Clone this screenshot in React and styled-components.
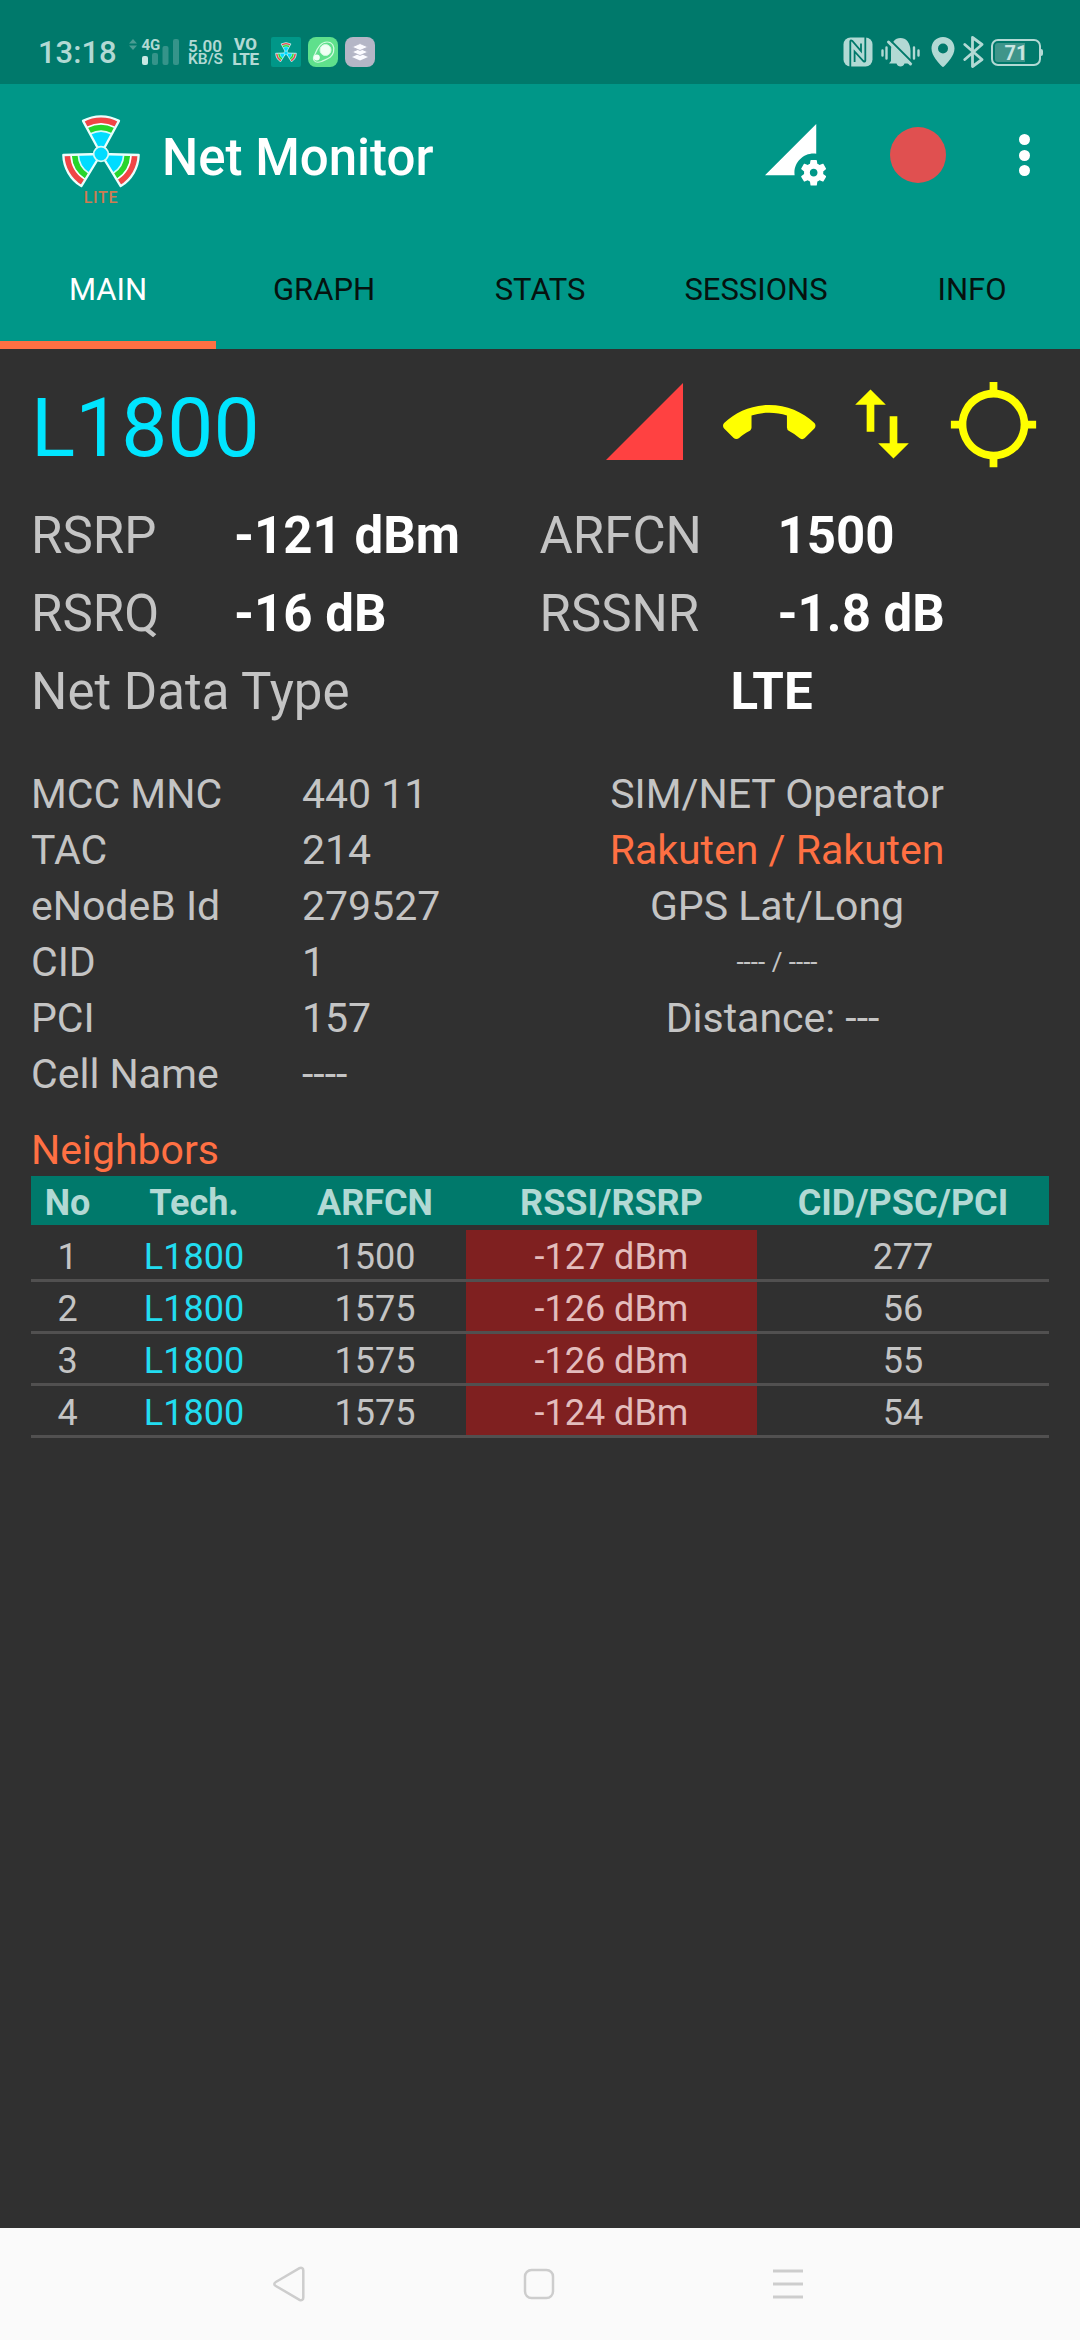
import React from "react";
import styled, { createGlobalStyle } from "styled-components";
import {
  MdPermDataSetting,
  MdCallEnd,
  MdImportExport,
  MdLocationSearching,
} from "react-icons/md";

const c = {
  dark: "#00796b",
  teal: "#009788",
  bg: "#303030",
  grey: "#c4c4c4",
  cyan: "#00e5ff",
  orange: "#ff7043",
  pale: "#b2d9d4",
  yellow: "#ffff00",
};

const GlobalStyle = createGlobalStyle`
  * { box-sizing: border-box; }
  body { margin: 0; background: ${c.bg}; font-family: Roboto, "Liberation Sans", sans-serif; }
  svg { display: block; flex: none; }
`;

const Screen = styled.div`
  width: 1080px;
  height: 2340px;
  display: flex;
  flex-direction: column;
  background: ${c.bg};
  overflow: hidden;
  white-space: nowrap;
`;

/* ---------- status bar ---------- */

const StatusBar = styled.header`
  height: 84px;
  flex: none;
  padding: 20px 37px 0 38px;
  background: ${c.dark};
  color: ${c.pale};
  display: flex;
  align-items: center;
`;
const Clock = styled.span`
  width: 90px;
  font-size: 31px;
  font-weight: 500;
  line-height: 36px;
  padding-top: 1px;
`;
const SignalBox = styled.div`
  width: 60px;
  height: 30px;
  display: flex;
`;
const StackedLabel = styled.div`
  width: ${(p) => p.$width}px;
  display: flex;
  flex-direction: column;
  align-items: ${(p) => p.$align || "flex-start"};
  font-weight: ${(p) => p.$weight};
`;
const StackedLine = styled.span`
  font-size: ${(p) => p.$size}px;
  line-height: ${(p) => p.$line}px;
  letter-spacing: ${(p) => p.$spacing || 0}px;
`;
const AppBadges = styled.div`
  margin-left: 12px;
  display: flex;
  gap: 7px;
`;
const AppBadge = styled.div`
  width: 30px;
  height: 30px;
  border-radius: ${(p) => p.$radius}px;
  background: ${(p) => p.$bg};
  display: grid;
  place-items: center;
`;
const StatusIcons = styled.div`
  margin-left: auto;
  display: flex;
  align-items: center;
`;
const IconSlot = styled.div`
  margin-right: ${(p) => p.$gap}px;
  padding-bottom: ${(p) => p.$lift || 0}px;
`;
const Battery = styled.div`
  width: 50px;
  height: 27px;
  border: 2px solid ${c.pale};
  border-radius: 7px;
  padding: 2px;
  display: flex;
`;
const BatteryLevel = styled.div`
  width: 42px;
  border-radius: 3px;
  background: linear-gradient(90deg, #3f958a 71%, transparent 71%);
  font-size: 20px;
  font-weight: 700;
  line-height: 20px;
  text-align: center;
  color: #c8e6e2;
`;
const BatteryTip = styled.div`
  width: 2px;
  height: 7px;
  background: ${c.pale};
  border-radius: 0 2px 2px 0;
`;

/* ---------- toolbar and tabs ---------- */

const Toolbar = styled.div`
  height: 142px;
  flex: none;
  padding: 0 50px 0 61px;
  background: ${c.teal};
  display: flex;
  align-items: center;
  color: #fff;
`;
const Logo = styled.div`
  width: 80px;
  height: 90px;
  margin-top: 7px;
  display: flex;
  flex-direction: column;
  align-items: center;
  gap: 2px;
`;
const LogoTag = styled.span`
  font-size: 16px;
  line-height: 16px;
  font-weight: 500;
  letter-spacing: 0.7px;
  color: #cf7c51;
`;
const Title = styled.h1`
  margin: 5px 0 0 21px;
  font-size: 51px;
  font-weight: 500;
  line-height: 60px;
`;
const Actions = styled.div`
  margin-left: auto;
  display: flex;
  align-items: center;
`;
const RecordDot = styled.div`
  width: 56px;
  height: 56px;
  border-radius: 50%;
  background: #e05050;
  margin: 0 73px 0 64px;
`;
const Overflow = styled.div`
  display: flex;
  flex-direction: column;
  gap: 4.6px;
`;
const Dot = styled.i`
  width: 11px;
  height: 11px;
  border-radius: 50%;
  background: #fff;
`;
const Tabs = styled.nav`
  height: 123px;
  flex: none;
  background: ${c.teal};
  display: grid;
  grid-template-columns: repeat(5, 1fr);
`;
const Tab = styled.div`
  padding-top: 12px;
  border-bottom: 8px solid ${(p) => (p.$active ? c.orange : "transparent")};
  color: ${(p) => (p.$active ? "#fff" : "#06120f")};
  display: flex;
  align-items: center;
  justify-content: center;
  font-size: 31px;
`;

/* ---------- content ---------- */

const Content = styled.main`
  flex: 1;
  padding: 0 31px;
  color: ${c.grey};
`;
const CellHeader = styled.section`
  height: 148px;
  padding-top: 2px;
  padding-right: 9.5px;
  display: flex;
  align-items: center;
  color: ${c.yellow};
`;
const Band = styled.h2`
  margin: 8px auto 0 0;
  font-size: 82px;
  font-weight: 400;
  line-height: 96px;
  color: ${c.cyan};
`;
const CellIcons = styled.div`
  display: flex;
  align-items: center;
`;
const Metrics = styled.section`
  display: grid;
  grid-template-columns: 203px 305.5px 238px 1fr;
  grid-auto-rows: 78px;
  font-size: 51px;
  line-height: 78px;
`;
const MetricValue = styled.b`
  color: #fff;
`;
const NetType = styled.section`
  display: flex;
  font-size: 51px;
  line-height: 78px;
`;
const NetLabel = styled.span`
  width: 463px;
`;
const NetValue = styled.b`
  flex: 1;
  text-align: center;
  color: #fff;
`;
const Details = styled.section`
  margin-top: 35px;
  display: flex;
  font-size: 41px;
  line-height: 56px;
`;
const Pairs = styled.div`
  width: 474px;
  display: grid;
  grid-template-columns: 271px 1fr;
  grid-auto-rows: 56px;
`;
const Operator = styled.div`
  flex: 1;
  display: flex;
  flex-direction: column;
  align-items: center;
`;
const OperatorLine = styled.span`
  height: 56px;
  font-size: ${(p) => (p.$small ? 26 : 41)}px;
  padding-right: ${(p) => p.$trail || 0}px;
  color: ${(p) => (p.$accent ? c.orange : "inherit")};
`;
const SectionTitle = styled.h3`
  margin: 22px 0 0;
  height: 52px;
  font-size: 41px;
  font-weight: 400;
  line-height: 52px;
  color: ${c.orange};
`;
const Table = styled.section`
  font-size: 36px;
`;
const TableRow = styled.div`
  display: grid;
  grid-template-columns: 73px 180px 182px 291px 1fr;
  height: 52px;
  border-bottom: 3px solid #515050;
`;
const TableHead = styled(TableRow)`
  height: 49px;
  margin-bottom: 5px;
  border: 0;
  background: ${c.dark};
  color: ${c.pale};
  font-weight: 700;
`;
const Cell = styled.span`
  padding-top: 5px;
  line-height: 44px;
  text-align: center;
  color: ${(p) => p.$color || "inherit"};
  background: ${(p) => p.$bg || "transparent"};
`;

const NavBar = styled.footer`
  height: 112px;
  flex: none;
  background: #fafafa;
  display: flex;
  justify-content: space-between;
  align-items: center;
  padding: 0 276px 0 272px;
`;

/* ---------- drawings ---------- */

const point = (r, deg) => {
  const a = (deg * Math.PI) / 180;
  return `${(r * Math.sin(a)).toFixed(2)} ${(-r * Math.cos(a)).toFixed(2)}`;
};
const arc = (r, half) => `M${point(r, -half)}A${r} ${r} 0 0 1 ${point(r, half)}`;

function Blades({ size }) {
  return (
    <svg width={size} height={(size * 222) / 240} viewBox="-120 -120 240 222">
      {[0, 120, 240].map((turn) => (
        <g key={turn} transform={`rotate(${turn})`} fill="none">
          <path d={`M0 0L${point(112, -28)}A112 112 0 0 1 ${point(112, 28)}Z`} fill="#00dcff" />
          <path d={arc(101, 27)} stroke="#f04545" strokeWidth="20" />
          <path d={arc(79, 27)} stroke="#27d52b" strokeWidth="19" />
          <path d={arc(90, 27)} stroke="#fff" strokeWidth="5" />
          <path d={arc(68, 27)} stroke="#d9fbf6" strokeWidth="5" />
          <path
            d={`M0 0L${point(113, -28.5)}A113 113 0 0 1 ${point(113, 28.5)}Z`}
            stroke="#eafffc"
            strokeWidth="7"
            strokeLinejoin="round"
          />
        </g>
      ))}
      <circle r="22" fill="#00dcff" stroke="#d9fbf6" strokeWidth="5" />
    </svg>
  );
}

function Signal() {
  return (
    <svg width="52" height="30" viewBox="128 37 52 30">
      <path d="M129 43.5L133 39l4 4.500zM129 45.500h8l-4 4.500z" fill="#4b9d93" />
      <text x="141.500" y="50" fontSize="15" fontWeight="700" fill={c.pale}>4G</text>
      <rect x="142" y="56" width="6" height="9" rx="2" fill="#c8e8e3" />
      <rect x="152" y="53" width="6" height="12" rx="2" fill="#35948a" />
      <rect x="162.500" y="46" width="6" height="19" rx="2" fill="#35948a" />
      <rect x="173" y="39" width="6" height="26" rx="2" fill="#35948a" />
    </svg>
  );
}

const Nfc = () => (
  <svg width="30" height="30" viewBox="0 0 30 30">
    <rect x="0.500" y="0.500" width="29" height="29" rx="7" fill={c.pale} />
    <path d="M7.300 30V4.500q.3-2 2-.5L18 14V6.500" fill="none" stroke={c.dark} strokeWidth="1.800" />
    <path d="M22.300 0v23.500q-.3 2-2 .5L11.600 14.500V25" fill="none" stroke={c.dark} strokeWidth="1.800" />
  </svg>
);

const BellOff = () => (
  <svg width="40" height="30" viewBox="0 0 40 30">
    <path d="M10 24V14C10 5.500 14 1 19.500 1S29.500 5.500 29.500 14v10l2 2.500H23.500c-1 4-7 4-8 0H8z" fill={c.pale} />
    <path d="M9 3L32 26" stroke={c.dark} strokeWidth="2" />
    <path d="M7.500 5L29.500 27" stroke={c.pale} strokeWidth="3" strokeLinecap="round" />
    <path d="M1.500 13.500v5M5.500 10.500v11M33 10.500v11M37.500 13.500v5" stroke={c.pale} strokeWidth="2.400" strokeLinecap="round" />
  </svg>
);

const Pin = () => (
  <svg width="24" height="30" viewBox="0 0 24 30">
    <path fillRule="evenodd" d="M12 0C5.300 0 .5 5 .5 11.500.5 19 8 26 10.800 29.300q1.200 1.400 2.400 0C16 26 23.500 19 23.500 11.500 23.500 5 18.700 0 12 0zm0 6.500a5 5 0 110 10 5 5 0 010-10z" fill={c.pale} />
  </svg>
);

const Bluetooth = () => (
  <svg width="22" height="34" viewBox="0 0 22 34">
    <path d="M1.800 9.500L19 24.500 9.500 31.500V2.500L19 9.500 1.800 24.500" fill="none" stroke={c.pale} strokeWidth="2.800" strokeLinejoin="round" strokeLinecap="round" />
  </svg>
);

const Orbit = () => (
  <svg width="26" height="26" viewBox="0 0 26 26">
    <path d="M5 15C8 8 11 3 17 3c5.500 0 8 5 6.500 10-1.500 6-7 7-12 9.500-7 2.500-10-2-6.500-7.500z" fill="none" stroke="#d2fbe0" strokeWidth="1.200" />
    <circle cx="15.500" cy="11" r="5.500" fill="#f1fff5" stroke="#d2fbe0" />
    <circle cx="6.800" cy="18.500" r="3" fill="#f1fff5" />
  </svg>
);

const Layers = () => (
  <svg width="18" height="18" viewBox="0 0 18 18" fill="#fbfbff">
    <path d="M9 10.500l8 3.500-8 3.500L1 14z" />
    <path d="M9 5.500L17 9l-8 3.500L1 9z" stroke="#b4b6c6" strokeWidth="0.900" />
    <path d="M9 .500L17 4 9 7.500 1 4z" stroke="#b4b6c6" strokeWidth="0.900" />
  </svg>
);

const SignalTriangle = () => (
  <svg width="77" height="77" viewBox="0 0 77 77">
    <path d="M0 77L77 0v77z" fill="#ff4141" />
  </svg>
);

/* ---------- data ---------- */

const metrics = [
  ["RSRP", "-121 dBm", "ARFCN", "1500"],
  ["RSRQ", "-16 dB", "RSSNR", "-1.8 dB"],
];
const pairs = [
  ["MCC MNC", "440 11"],
  ["TAC", "214"],
  ["eNodeB Id", "279527"],
  ["CID", "1"],
  ["PCI", "157"],
  ["Cell Name", "----"],
];
const neighbors = [
  ["1", "L1800", "1500", "-127 dBm", "277"],
  ["2", "L1800", "1575", "-126 dBm", "56"],
  ["3", "L1800", "1575", "-126 dBm", "55"],
  ["4", "L1800", "1575", "-124 dBm", "54"],
];

export default function App() {
  return (
    <Screen>
      <GlobalStyle />
      <StatusBar>
        <Clock>13:18</Clock>
        <SignalBox><Signal /></SignalBox>
        <StackedLabel $width={44} $weight={600}>
          <StackedLine $size={17} $line={14}>5.00</StackedLine>
          <StackedLine $size={15.5} $line={12}>KB/S</StackedLine>
        </StackedLabel>
        <StackedLabel $width={27} $weight={800} $align="center">
          <StackedLine $size={17} $line={15.5}>VO</StackedLine>
          <StackedLine $size={17} $line={15.5} $spacing={-0.4}>LTE</StackedLine>
        </StackedLabel>
        <AppBadges>
          <AppBadge $bg={c.teal} $radius={2}><Blades size={22} /></AppBadge>
          <AppBadge $bg="#5fe08c" $radius={8}><Orbit /></AppBadge>
          <AppBadge $bg="#b4b6c6" $radius={8}><Layers /></AppBadge>
        </AppBadges>
        <StatusIcons>
          <IconSlot $gap={8}><Nfc /></IconSlot>
          <IconSlot $gap={10}><BellOff /></IconSlot>
          <IconSlot $gap={8}><Pin /></IconSlot>
          <IconSlot $gap={6}><Bluetooth /></IconSlot>
          <Battery><BatteryLevel>71</BatteryLevel></Battery>
          <BatteryTip />
        </StatusIcons>
      </StatusBar>

      <Toolbar>
        <Logo>
          <Blades size={80} />
          <LogoTag>LITE</LogoTag>
        </Logo>
        <Title>Net Monitor</Title>
        <Actions>
          <MdPermDataSetting size={61.5} />
          <RecordDot />
          <Overflow><Dot /><Dot /><Dot /></Overflow>
        </Actions>
      </Toolbar>
      <Tabs>
        {["MAIN", "GRAPH", "STATS", "SESSIONS", "INFO"].map((name, i) => (
          <Tab key={name} $active={i === 0}>{name}</Tab>
        ))}
      </Tabs>

      <Content>
        <CellHeader>
          <Band>L1800</Band>
          <CellIcons>
            <IconSlot $gap={40} $lift={5}><SignalTriangle /></IconSlot>
            <IconSlot $gap={20}><MdCallEnd size={92.5} /></IconSlot>
            <IconSlot $gap={19}><MdImportExport size={92} /></IconSlot>
            <MdLocationSearching size={93} />
          </CellIcons>
        </CellHeader>
        <Metrics>
          {metrics.map(([a, b, d, e]) => (
            <React.Fragment key={a}>
              <span>{a}</span>
              <MetricValue>{b}</MetricValue>
              <span>{d}</span>
              <MetricValue>{e}</MetricValue>
            </React.Fragment>
          ))}
        </Metrics>
        <NetType>
          <NetLabel>Net Data Type</NetLabel>
          <NetValue>LTE</NetValue>
        </NetType>
        <Details>
          <Pairs>
            {pairs.map(([k, v]) => (
              <React.Fragment key={k}>
                <span>{k}</span>
                <span>{v}</span>
              </React.Fragment>
            ))}
          </Pairs>
          <Operator>
            <OperatorLine>SIM/NET Operator</OperatorLine>
            <OperatorLine $accent>Rakuten / Rakuten</OperatorLine>
            <OperatorLine>GPS Lat/Long</OperatorLine>
            <OperatorLine $small>---- / ----</OperatorLine>
            <OperatorLine $trail={9}>Distance: ---</OperatorLine>
          </Operator>
        </Details>
        <SectionTitle>Neighbors</SectionTitle>
        <Table>
          <TableHead>
            {["No", "Tech.", "ARFCN", "RSSI/RSRP", "CID/PSC/PCI"].map((h) => (
              <Cell key={h}>{h}</Cell>
            ))}
          </TableHead>
          {neighbors.map(([no, tech, arfcn, rssi, pci]) => (
            <TableRow key={no}>
              <Cell>{no}</Cell>
              <Cell $color="#22dcf0">{tech}</Cell>
              <Cell>{arfcn}</Cell>
              <Cell $bg="#7f2020" $color="#e3bcbc">{rssi}</Cell>
              <Cell>{pci}</Cell>
            </TableRow>
          ))}
        </Table>
      </Content>

      <NavBar>
        <svg width="34" height="38" viewBox="0 0 34 38">
          <path d="M3.800 17L27.500 3.200c2-1 3.800 0 3.800 2v27.600c0 2-1.800 3-3.800 2L3.800 21c-2-1.200-2-2.800 0-4z" fill="none" stroke="#cdcdcd" strokeWidth="2.500" />
        </svg>
        <svg width="32" height="32" viewBox="0 0 32 32">
          <rect x="2" y="2" width="28" height="28" rx="6.500" fill="none" stroke="#cdcdcd" strokeWidth="2.500" />
        </svg>
        <svg width="32" height="32" viewBox="0 0 32 32">
          <path d="M1 3h30M1 16h30M1 29h30" stroke="#cdcdcd" strokeWidth="2.800" />
        </svg>
      </NavBar>
    </Screen>
  );
}
